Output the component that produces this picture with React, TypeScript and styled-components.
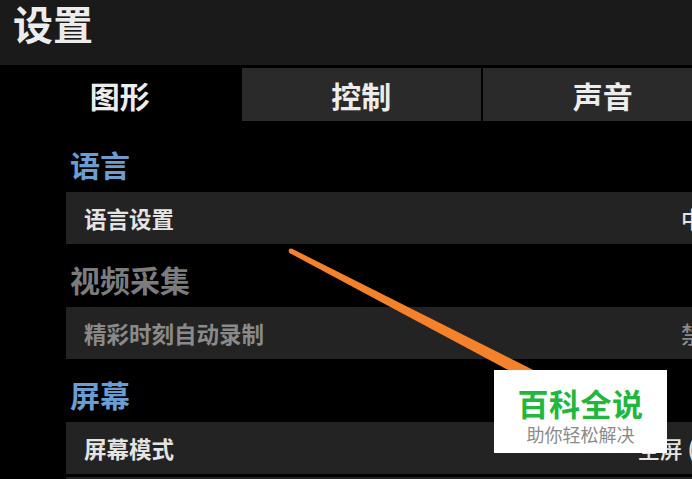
import styled, { createGlobalStyle } from 'styled-components'

const GlobalStyle = createGlobalStyle`
  html, body {
    margin: 0;
    padding: 0;
    background: #000;
    overflow: hidden;
  }
  body {
    font-family: "Noto Sans CJK SC", "Noto Sans", sans-serif;
  }
`

const Page = styled.div`
  position: relative;
  width: 964px;
  height: 479px;
  background: #000;
  overflow: hidden;
`

const Header = styled.header`
  height: 65px;
  background: #1a1a1a;
  padding: 3px 0 0 13px;
  box-sizing: border-box;
  h1 {
    margin: 0;
    font-size: 40px;
    line-height: 40px;
    font-weight: 700;
    color: #ececec;
  }
`

const TabBar = styled.nav`
  display: grid;
  grid-template-columns: repeat(4, 1fr);
  gap: 2px;
  margin-top: 3px;
`

const Tab = styled.div<{ $active?: boolean }>`
  height: 53px;
  display: flex;
  align-items: center;
  justify-content: center;
  background: ${p => (p.$active ? '#000' : '#2a2a2a')};
  color: #ededed;
  font-size: 30px;
  font-weight: 700;
`

const Content = styled.main`
  padding: 8px 0 0 66px;
  width: 678px;
`

const SectionTitle = styled.h2<{ $muted?: boolean }>`
  margin: 0 0 13px;
  padding: 20px 0 0 4px;
  font-size: 30px;
  line-height: 30px;
  font-weight: 700;
  color: ${p => (p.$muted ? '#7c7c7c' : '#6a9dd2')};
`

const Row = styled.div<{ $muted?: boolean }>`
  height: 52px;
  display: flex;
  align-items: center;
  padding: 0 18px;
  background: #232323;
  font-size: 22.5px;
  font-weight: 700;
  color: ${p => (p.$muted ? '#8a8a8a' : '#e4e4e4')};
  & + & {
    margin-top: 3px;
  }
  span {
    margin-left: auto;
    font-weight: 500;
  }
`

const Arrow = styled.svg`
  position: absolute;
  left: 0;
  top: 0;
  pointer-events: none;
`

const Watermark = styled.div`
  position: absolute;
  left: 494px;
  top: 370px;
  width: 173px;
  height: 83px;
  background: #fff;
  display: flex;
  flex-direction: column;
  align-items: center;
  padding-top: 15px;
  box-sizing: border-box;
  strong {
    font-size: 31px;
    line-height: 36px;
    font-weight: 700;
    color: #1fb83c;
    letter-spacing: 0.5px;
  }
  small {
    font-size: 18px;
    line-height: 24px;
    color: #8b8b8b;
    margin-top: 1px;
  }
`

export default function App() {
  return (
    <Page>
      <GlobalStyle />
      <Header>
        <h1>设置</h1>
      </Header>
      <TabBar>
        <Tab $active>图形</Tab>
        <Tab>控制</Tab>
        <Tab>声音</Tab>
        <Tab>其他</Tab>
      </TabBar>
      <Content>
        <SectionTitle>语言</SectionTitle>
        <Row>
          语言设置<span>中文</span>
        </Row>
        <SectionTitle $muted>视频采集</SectionTitle>
        <Row $muted>
          精彩时刻自动录制<span>禁用</span>
        </Row>
        <SectionTitle>屏幕</SectionTitle>
        <Row>
          屏幕模式<span>全屏 (开)</span>
        </Row>
        <Row>
          分辨率<span>1920</span>
        </Row>
      </Content>
      <Arrow width="692" height="479" viewBox="0 0 692 479">
        <circle cx="291" cy="251" r="2.4" fill="#f5822a" />
        <polygon
          points="292.1,248.8 289.9,253.2 527.3,380.3 532.8,369.7"
          fill="#f5822a"
        />
      </Arrow>
      <Watermark>
        <strong>百科全说</strong>
        <small>助你轻松解决</small>
      </Watermark>
    </Page>
  )
}
